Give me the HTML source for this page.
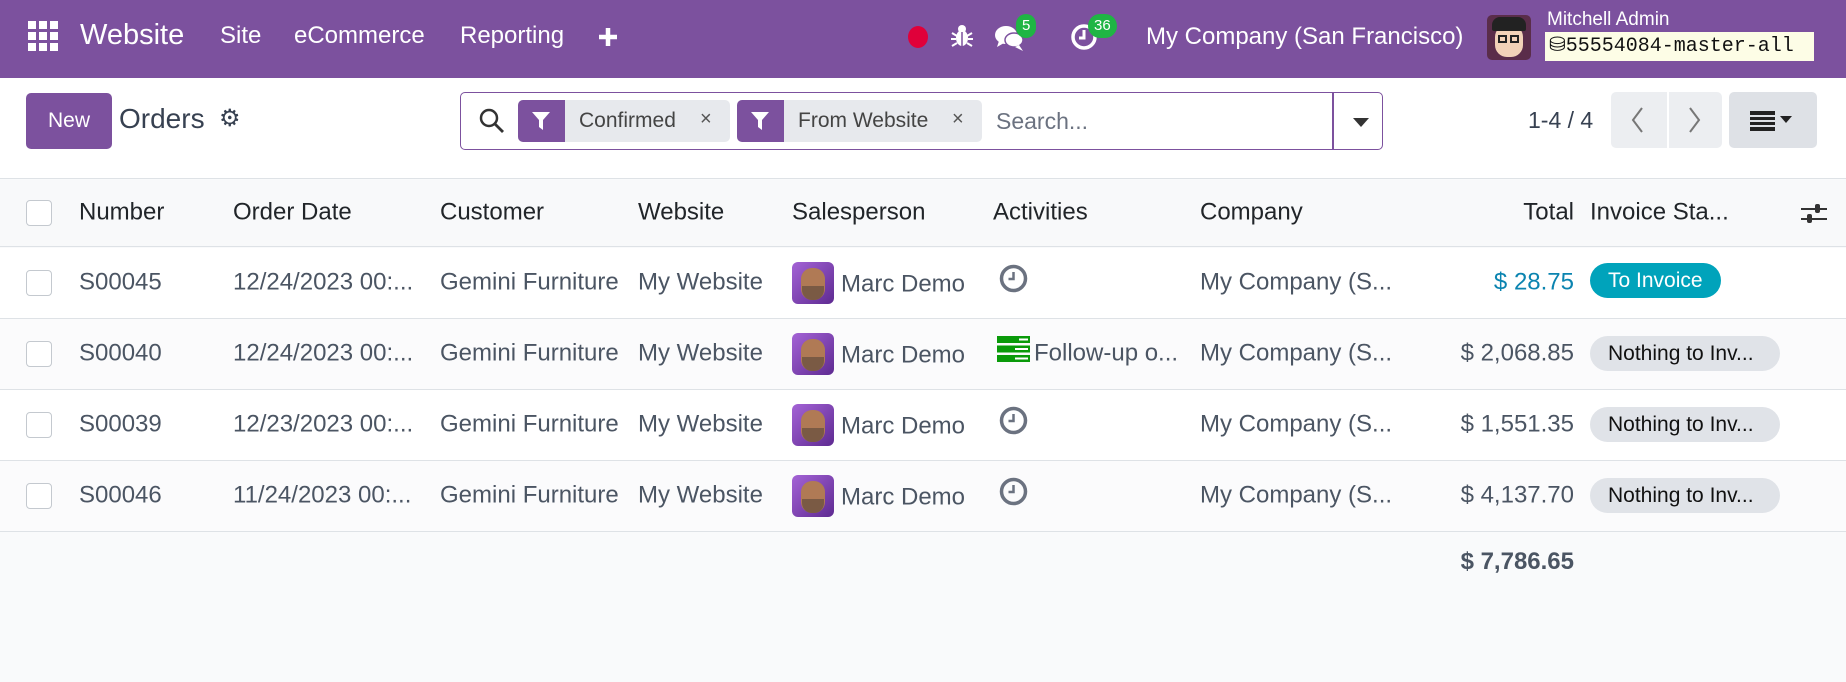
<!DOCTYPE html>
<html><head><meta charset="utf-8"><style>
*{box-sizing:border-box;margin:0;padding:0}
body{width:1846px;height:682px;overflow:hidden;background:#f9fafb;font-family:"Liberation Sans",sans-serif;color:#374151;position:relative}
.a{position:absolute;white-space:nowrap}
.nav{position:absolute;left:0;top:0;width:1846px;height:78px;background:#7c519e;color:#fff}
.nav .t{position:absolute;top:22px;font-size:24px;color:#fff}
.badge{position:absolute;background:#1fb544;color:#fff;font-size:15px;border-radius:13px;height:24px;line-height:24px;text-align:center;padding:0 6px}
.cp{position:absolute;left:0;top:78px;width:1846px;height:101px;background:#fff;border-bottom:1px solid #dee2e6}
.hdr{position:absolute;left:0;top:180px;width:1846px;height:67px;background:#f8f9fa;border-bottom:1px solid #dee2e6}
.row{position:absolute;left:0;width:1846px;height:71px;border-bottom:1px solid #dee2e6;background:#fff}
.row.g{background:#fbfbfc}
.cell{position:absolute;top:50%;transform:translateY(-52%);font-size:24px;white-space:nowrap;color:#4b5563}
.hdr .cell{color:#212529}
.cb{position:absolute;left:26px;top:50%;margin-top:-13px;width:26px;height:26px;border:1.5px solid #c4c9cf;border-radius:4px;background:#fff}
.av{position:absolute;left:792px;top:50%;margin-top:-21px;width:42px;height:42px;border-radius:6px;background:linear-gradient(135deg,#a463d6,#5e2a91);overflow:hidden}
.pill{position:absolute;left:1590px;top:50%;margin-top:-18px;height:35px;line-height:35px;border-radius:18px;font-size:21px;padding:0 18px;background:#e0e3e8;color:#111}
.pill.n{width:190px}
</style></head><body>
<div class="nav">
  <svg class="a" style="left:28px;top:21px" width="30" height="30" viewBox="0 0 30 30" fill="#fff">
    <rect x="0" y="0" width="8" height="8"/><rect x="11" y="0" width="8" height="8"/><rect x="22" y="0" width="8" height="8"/>
    <rect x="0" y="11" width="8" height="8"/><rect x="11" y="11" width="8" height="8"/><rect x="22" y="11" width="8" height="8"/>
    <rect x="0" y="22" width="8" height="8"/><rect x="11" y="22" width="8" height="8"/><rect x="22" y="22" width="8" height="8"/></svg>
  <div class="t" style="left:80px;top:19px;font-size:29px">Website</div>
  <div class="t" style="left:220px">Site</div>
  <div class="t" style="left:294px">eCommerce</div>
  <div class="t" style="left:460px">Reporting</div>
  <svg class="a" style="left:598px;top:27px" width="20" height="20" viewBox="0 0 20 20"><path d="M10 1v18M1 10h18" stroke="#fff" stroke-width="4.5"/></svg>
  <div class="a" style="left:908px;top:26px;width:20px;height:22px;border-radius:50%;background:#e0003a"></div>
  <svg class="a" style="left:951px;top:24px" width="22" height="24" viewBox="0 0 22 24" fill="#fff"><ellipse cx="11" cy="14" rx="6" ry="8"/><circle cx="11" cy="5" r="4"/><path d="M1 9l5 3M21 9l-5 3M0 15h5M22 15h-5M1 22l5-3M21 22l-5-3" stroke="#fff" stroke-width="2"/><path d="M11 8v14" stroke="#7c519e" stroke-width="1.5"/></svg>
  <svg class="a" style="left:995px;top:24px" width="30" height="28" viewBox="0 0 30 28" fill="#fff"><ellipse cx="11" cy="11" rx="11" ry="9"/><path d="M4 17l-2 6 7-4z"/><ellipse cx="19" cy="16" rx="9" ry="7" stroke="#7c519e" stroke-width="1.5"/><path d="M24 21l4 6-8-4z"/></svg>
  <div class="badge" style="left:1016px;top:14px">5</div>
  <svg class="a" style="left:1070px;top:23px" width="28" height="28" viewBox="0 0 28 28"><circle cx="14" cy="14" r="11" fill="none" stroke="#fff" stroke-width="3.5"/><path d="M14 7v8h-5" stroke="#fff" stroke-width="3" fill="none"/></svg>
  <div class="badge" style="left:1088px;top:14px">36</div>
  <div class="t" style="left:1146px;top:23px;font-size:24px">My Company (San Francisco)</div>
  <div class="a" style="left:1487px;top:15px;width:44px;height:45px;border-radius:5px;background:#5a2d4a;overflow:hidden">
    <div class="a" style="left:8px;top:10px;width:28px;height:32px;border-radius:12px;background:#f2d2b8"></div>
    <div class="a" style="left:5px;top:2px;width:34px;height:14px;border-radius:8px 8px 2px 2px;background:#222"></div>
    <div class="a" style="left:11px;top:20px;width:9px;height:8px;border:2px solid #222"></div>
    <div class="a" style="left:23px;top:20px;width:9px;height:8px;border:2px solid #222"></div>
  </div>
  <div class="t" style="left:1547px;top:9px;font-size:19px">Mitchell Admin</div>
  <div class="a" style="left:1545px;top:32px;width:269px;height:29px;background:#fdfde6;color:#111;font-family:'Liberation Mono',monospace;font-size:20px;line-height:29px;padding-left:4px">&#9921;55554084-master-all</div>
</div>

<div class="cp">
  <div class="a" style="left:26px;top:15px;width:86px;height:56px;background:#7c519e;border-radius:5px;color:#fff;font-size:21px;line-height:56px;text-align:center">New</div>
  <div class="a" style="left:119px;top:25px;font-size:28px;color:#374151">Orders</div>
  <div class="a" style="left:219px;top:26px;font-size:24px;color:#374151">&#9881;</div>
  <div class="a" style="left:460px;top:14px;width:923px;height:58px;border:1.5px solid #7c519e;border-radius:5px;background:#fff">
    <svg class="a" style="left:18px;top:15px" width="26" height="26" viewBox="0 0 26 26"><circle cx="10" cy="10" r="8" fill="none" stroke="#333" stroke-width="2.5"/><path d="M16 16l8 8" stroke="#333" stroke-width="2.8"/></svg>
    <div class="a" style="left:57px;top:7px;width:212px;height:42px;background:#e7e9ed;border-radius:5px;overflow:hidden">
      <div class="a" style="left:0;top:0;width:47px;height:42px;background:#7c519e"></div>
      <svg class="a" style="left:14px;top:12px" width="18" height="18" viewBox="0 0 18 18" fill="#fff"><path d="M0 0h18l-7 8v10l-4-3V8z"/></svg>
      <div class="a" style="left:61px;top:9px;font-size:21px;color:#444">Confirmed</div>
      <div class="a" style="left:182px;top:8px;font-size:20px;color:#555">×</div>
    </div>
    <div class="a" style="left:276px;top:7px;width:245px;height:42px;background:#e7e9ed;border-radius:5px;overflow:hidden">
      <div class="a" style="left:0;top:0;width:47px;height:42px;background:#7c519e"></div>
      <svg class="a" style="left:14px;top:12px" width="18" height="18" viewBox="0 0 18 18" fill="#fff"><path d="M0 0h18l-7 8v10l-4-3V8z"/></svg>
      <div class="a" style="left:61px;top:9px;font-size:21px;color:#444">From Website</div>
      <div class="a" style="left:215px;top:8px;font-size:20px;color:#555">×</div>
    </div>
    <div class="a" style="left:535px;top:15px;font-size:23px;color:#6b7280">Search...</div>
    <div class="a" style="left:871px;top:0;width:1.5px;height:56px;background:#7c519e"></div>
    <div class="a" style="left:892px;top:25px;width:0;height:0;border-left:8px solid transparent;border-right:8px solid transparent;border-top:9px solid #333"></div>
  </div>
  <div class="a" style="left:1528px;top:29px;font-size:23px;color:#374151">1-4 / 4</div>
  <div class="a" style="left:1611px;top:14px;width:111px;height:56px;background:#eceef1;border-radius:5px"></div>
  <div class="a" style="left:1667px;top:14px;width:2px;height:56px;background:#fff"></div>
  <svg class="a" style="left:1628px;top:28px" width="20" height="28" viewBox="0 0 20 28"><path d="M14 2L5 14l9 12" stroke="#777" stroke-width="2" fill="none"/></svg>
  <svg class="a" style="left:1684px;top:28px" width="20" height="28" viewBox="0 0 20 28"><path d="M6 2l9 12-9 12" stroke="#777" stroke-width="2" fill="none"/></svg>
  <div class="a" style="left:1729px;top:14px;width:88px;height:56px;background:#dee1e6;border-radius:5px"></div>
  <svg class="a" style="left:1750px;top:33px" width="45" height="20" viewBox="0 0 45 20" fill="#222"><rect x="0" y="0" width="25" height="4"/><rect x="0" y="6" width="25" height="3"/><rect x="0" y="11" width="25" height="3"/><rect x="0" y="16" width="25" height="4"/><path d="M30 5h12l-6 7z"/></svg>
</div>

<div class="hdr">
  <div class="cb"></div>
  <div class="cell" style="left:79px">Number</div>
  <div class="cell" style="left:233px">Order Date</div>
  <div class="cell" style="left:440px">Customer</div>
  <div class="cell" style="left:638px">Website</div>
  <div class="cell" style="left:792px">Salesperson</div>
  <div class="cell" style="left:993px">Activities</div>
  <div class="cell" style="left:1200px">Company</div>
  <div class="cell" style="right:272px">Total</div>
  <div class="cell" style="left:1590px">Invoice Sta...</div>
  <svg class="a" style="left:1801px;top:22px" width="26" height="24" viewBox="0 0 26 24"><path d="M0 7h26M0 17h26" stroke="#333" stroke-width="2"/><rect x="14" y="2" width="5" height="9" rx="2" fill="#333"/><rect x="6" y="12" width="5" height="9" rx="2" fill="#333"/></svg>
</div>

<div class="row" style="top:248px">
  <div class="cb"></div>
  <div class="cell" style="left:79px">S00045</div>
  <div class="cell" style="left:233px">12/24/2023 00:...</div>
  <div class="cell" style="left:440px">Gemini Furniture</div>
  <div class="cell" style="left:638px">My Website</div>
  <div class="av"><div class="a" style="left:9px;top:6px;width:24px;height:32px;border-radius:11px;background:#b07a55"></div><div class="a" style="left:10px;top:24px;width:22px;height:14px;border-radius:0 0 10px 10px;background:#7a5a44"></div></div>
  <div class="cell" style="left:841px;margin-top:2px">Marc Demo</div>
  <svg class="a" style="left:999px;top:16px" width="29" height="29" viewBox="0 0 29 29"><circle cx="14.5" cy="14.5" r="12" fill="none" stroke="#6b7280" stroke-width="3.5"/><path d="M14.5 8v7h-5" stroke="#6b7280" stroke-width="2.5" fill="none"/></svg>
  <div class="cell" style="left:1200px">My Company (S...</div>
  <div class="cell" style="right:272px;color:#0b84b0">$ 28.75</div>
  <div class="pill" style="background:#00a3bb;color:#fff;margin-top:-20px">To Invoice</div>
</div>
<div class="row g" style="top:319px">
  <div class="cb"></div>
  <div class="cell" style="left:79px">S00040</div>
  <div class="cell" style="left:233px">12/24/2023 00:...</div>
  <div class="cell" style="left:440px">Gemini Furniture</div>
  <div class="cell" style="left:638px">My Website</div>
  <div class="av"><div class="a" style="left:9px;top:6px;width:24px;height:32px;border-radius:11px;background:#b07a55"></div><div class="a" style="left:10px;top:24px;width:22px;height:14px;border-radius:0 0 10px 10px;background:#7a5a44"></div></div>
  <div class="cell" style="left:841px;margin-top:2px">Marc Demo</div>
  <svg class="a" style="left:997px;top:17px" width="33" height="26" viewBox="0 0 33 26"><rect x="0" y="0" width="33" height="7" fill="#0a9a0a"/><rect x="0" y="9.5" width="33" height="7" fill="#0a9a0a"/><rect x="0" y="19" width="33" height="7" fill="#0a9a0a"/><rect x="22" y="2.5" width="9" height="2" fill="#fff"/><rect x="18" y="12" width="13" height="2" fill="#fff"/><rect x="18" y="21.5" width="13" height="2" fill="#fff"/></svg>
  <div class="cell" style="left:1034px">Follow-up o...</div>
  <div class="cell" style="left:1200px">My Company (S...</div>
  <div class="cell" style="right:272px">$ 2,068.85</div>
  <div class="pill n">Nothing to Inv...</div>
</div>
<div class="row" style="top:390px">
  <div class="cb"></div>
  <div class="cell" style="left:79px">S00039</div>
  <div class="cell" style="left:233px">12/23/2023 00:...</div>
  <div class="cell" style="left:440px">Gemini Furniture</div>
  <div class="cell" style="left:638px">My Website</div>
  <div class="av"><div class="a" style="left:9px;top:6px;width:24px;height:32px;border-radius:11px;background:#b07a55"></div><div class="a" style="left:10px;top:24px;width:22px;height:14px;border-radius:0 0 10px 10px;background:#7a5a44"></div></div>
  <div class="cell" style="left:841px;margin-top:2px">Marc Demo</div>
  <svg class="a" style="left:999px;top:16px" width="29" height="29" viewBox="0 0 29 29"><circle cx="14.5" cy="14.5" r="12" fill="none" stroke="#6b7280" stroke-width="3.5"/><path d="M14.5 8v7h-5" stroke="#6b7280" stroke-width="2.5" fill="none"/></svg>
  <div class="cell" style="left:1200px">My Company (S...</div>
  <div class="cell" style="right:272px">$ 1,551.35</div>
  <div class="pill n">Nothing to Inv...</div>
</div>
<div class="row g" style="top:461px">
  <div class="cb"></div>
  <div class="cell" style="left:79px">S00046</div>
  <div class="cell" style="left:233px">11/24/2023 00:...</div>
  <div class="cell" style="left:440px">Gemini Furniture</div>
  <div class="cell" style="left:638px">My Website</div>
  <div class="av"><div class="a" style="left:9px;top:6px;width:24px;height:32px;border-radius:11px;background:#b07a55"></div><div class="a" style="left:10px;top:24px;width:22px;height:14px;border-radius:0 0 10px 10px;background:#7a5a44"></div></div>
  <div class="cell" style="left:841px;margin-top:2px">Marc Demo</div>
  <svg class="a" style="left:999px;top:16px" width="29" height="29" viewBox="0 0 29 29"><circle cx="14.5" cy="14.5" r="12" fill="none" stroke="#6b7280" stroke-width="3.5"/><path d="M14.5 8v7h-5" stroke="#6b7280" stroke-width="2.5" fill="none"/></svg>
  <div class="cell" style="left:1200px">My Company (S...</div>
  <div class="cell" style="right:272px">$ 4,137.70</div>
  <div class="pill n">Nothing to Inv...</div>
</div>
<div class="a" style="right:272px;top:548px;font-size:24px;font-weight:bold;color:#4b5563">$ 7,786.65</div>
</body></html>
